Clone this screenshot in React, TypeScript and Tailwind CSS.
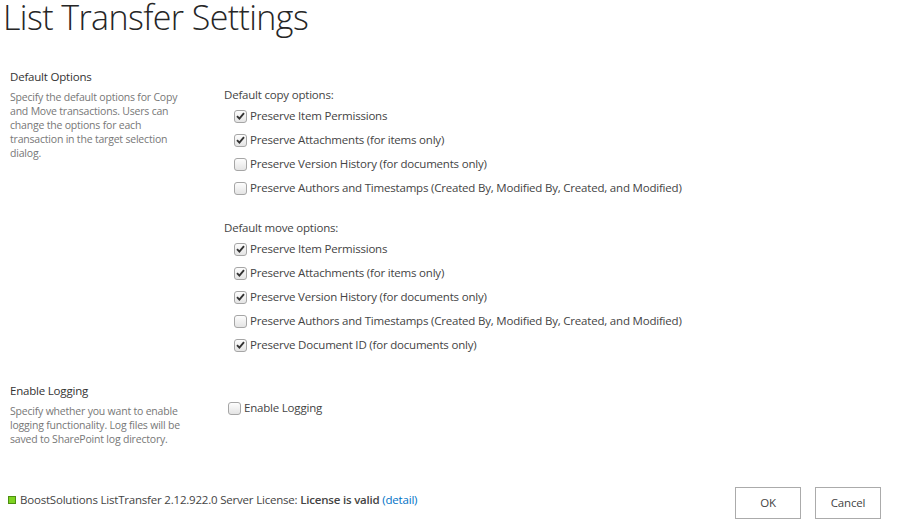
import React from 'react';

type Opt = { label: string; checked: boolean };

const copyOptions: Opt[] = [
  { label: 'Preserve Item Permissions', checked: true },
  { label: 'Preserve Attachments (for items only)', checked: true },
  { label: 'Preserve Version History (for documents only)', checked: false },
  { label: 'Preserve Authors and Timestamps (Created By, Modified By, Created, and Modified)', checked: false },
];

const moveOptions: Opt[] = [
  { label: 'Preserve Item Permissions', checked: true },
  { label: 'Preserve Attachments (for items only)', checked: true },
  { label: 'Preserve Version History (for documents only)', checked: true },
  { label: 'Preserve Authors and Timestamps (Created By, Modified By, Created, and Modified)', checked: false },
  { label: 'Preserve Document ID (for documents only)', checked: true },
];

function Box({ checked }: { checked: boolean }) {
  return (
    <span className="w-[13px] h-[13px] rounded-[3px] border border-[#a6a6a6] bg-gradient-to-b from-[#fdfdfd] to-[#e4e4e4] flex items-center justify-center shrink-0">
      {checked && (
        <svg width="9" height="8" viewBox="0 0 9 8">
          <path d="M1 4.2 L3.4 6.6 L8 1.2" fill="none" stroke="#333" strokeWidth="1.9" />
        </svg>
      )}
    </span>
  );
}

function Option({ opt }: { opt: Opt }) {
  return (
    <div className="flex items-center gap-[3px] h-[24px] pl-[10px]">
      <Box checked={opt.checked} />
      <span>{opt.label}</span>
    </div>
  );
}

export default function App() {
  return (
    <div className="w-[900px] h-[525px] bg-white text-[#444] overflow-hidden tracking-[-0.2px]" style={{ fontFamily: '"Open Sans", sans-serif' }}>
      <h1 className="text-[34px] font-light leading-[34px] text-[#262626] pl-[3px] tracking-[-0.6px]">List Transfer Settings</h1>

      <div className="flex mt-[34px]">
        <div className="w-[224px] pl-[10px] shrink-0">
          <div className="text-[11.5px] leading-[18px] text-[#333]">Default Options</div>
          <p className="mt-[4px] text-[10.5px] leading-[14px] text-[#777]">
            Specify the default options for Copy<br />
            and Move transactions. Users can<br />
            change the options for each<br />
            transaction in the target selection<br />
            dialog.
          </p>
        </div>
        <div className="pt-[18px] text-[11.5px]">
          <div className="leading-[18px]">Default copy options:</div>
          <div>
            {copyOptions.map((o, i) => (
              <Option key={i} opt={o} />
            ))}
          </div>
          <div className="leading-[18px] mt-[19px]">Default move options:</div>
          <div>
            {moveOptions.map((o, i) => (
              <Option key={i} opt={o} />
            ))}
          </div>
        </div>
      </div>

      <div className="flex mt-[25px]">
        <div className="w-[218px] pl-[10px] shrink-0">
          <div className="text-[11.5px] leading-[18px] text-[#333]">Enable Logging</div>
          <p className="mt-[4px] text-[10.5px] leading-[14px] text-[#777]">
            Specify whether you want to enable<br />
            logging functionality. Log files will be<br />
            saved to SharePoint log directory.
          </p>
        </div>
        <div className="pt-[17px] text-[11.5px]">
          <div className="flex items-center gap-[3px] h-[18px] pl-[10px]">
            <Box checked={false} />
            <span>Enable Logging</span>
          </div>
        </div>
      </div>

      <div className="flex items-center justify-between mt-[35px] pl-[8px] pr-[19px]">
        <div className="flex items-center gap-[4px] text-[11.5px] leading-[18px]">
          <span className="w-[8px] h-[8px] bg-[#7ed321] border border-[#4d8f10]" />
          <span>
            BoostSolutions ListTransfer 2.12.922.0 Server License: <b className="font-semibold">License is valid</b>{' '}
            <span className="text-[#0072c6]">(detail)</span>
          </span>
        </div>
        <div className="flex gap-[14px] mt-[6px]">
          <button className="w-[66px] h-[32px] border border-[#ababab] bg-white text-[11.5px] text-[#444]">OK</button>
          <button className="w-[66px] h-[32px] border border-[#ababab] bg-white text-[11.5px] text-[#444]">Cancel</button>
        </div>
      </div>
    </div>
  );
}
